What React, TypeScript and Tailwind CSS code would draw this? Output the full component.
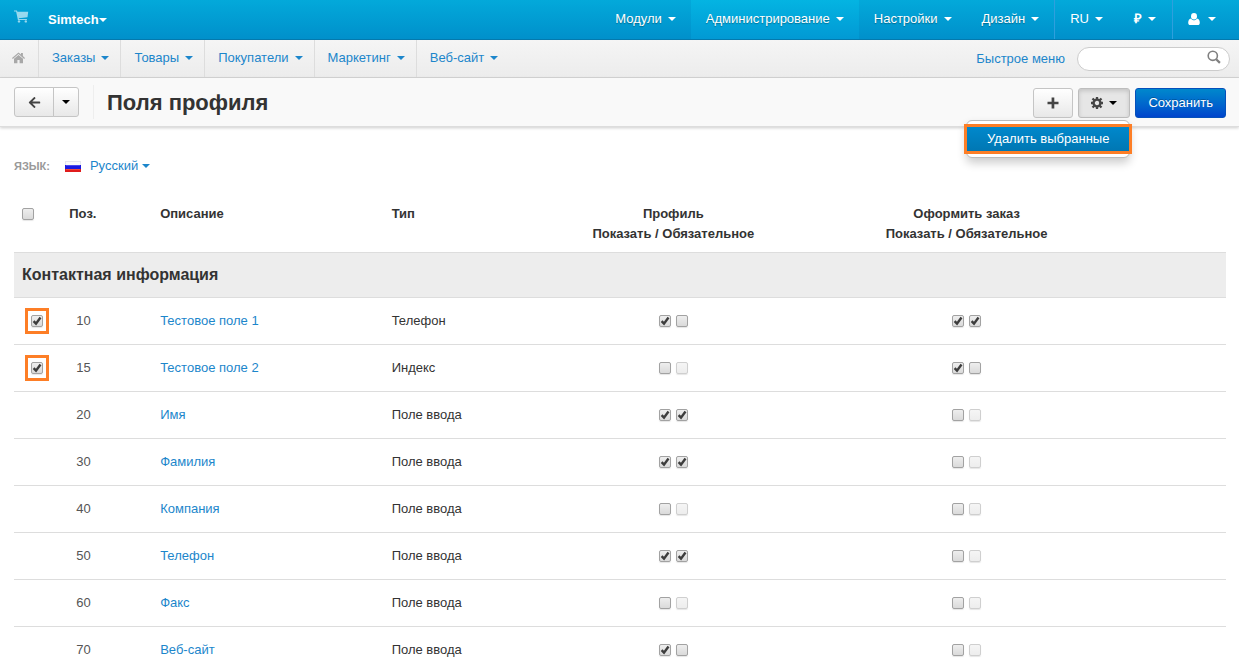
import React, { useState } from 'react';
import { FaArrowLeft } from 'react-icons/fa';

type MenuItem = {
  label: string;
  active?: boolean;
};

type Check = 'on' | 'off' | 'disabled';

type Field = {
  pos: number;
  name: string;
  type: string;
  removable?: boolean;
  profile: [Check, Check];
  checkout: [Check, Check];
};

const adminMenu: MenuItem[] = [
  { label: 'Модули' },
  { label: 'Администрирование', active: true },
  { label: 'Настройки' },
  { label: 'Дизайн' },
];

const storeMenu: string[] = ['Заказы', 'Товары', 'Покупатели', 'Маркетинг', 'Веб-сайт'];

const fields: Field[] = [
  { pos: 10, name: 'Тестовое поле 1', type: 'Телефон', removable: true, profile: ['on', 'off'], checkout: ['on', 'on'] },
  { pos: 15, name: 'Тестовое поле 2', type: 'Индекс', removable: true, profile: ['off', 'disabled'], checkout: ['on', 'off'] },
  { pos: 20, name: 'Имя', type: 'Поле ввода', profile: ['on', 'on'], checkout: ['off', 'disabled'] },
  { pos: 30, name: 'Фамилия', type: 'Поле ввода', profile: ['on', 'on'], checkout: ['off', 'disabled'] },
  { pos: 40, name: 'Компания', type: 'Поле ввода', profile: ['off', 'disabled'], checkout: ['off', 'disabled'] },
  { pos: 50, name: 'Телефон', type: 'Поле ввода', profile: ['on', 'on'], checkout: ['off', 'disabled'] },
  { pos: 60, name: 'Факс', type: 'Поле ввода', profile: ['off', 'disabled'], checkout: ['off', 'disabled'] },
  { pos: 70, name: 'Веб-сайт', type: 'Поле ввода', profile: ['on', 'off'], checkout: ['off', 'disabled'] },
];

const Caret = () => (
  <span className="inline-block border-x-4 border-t-4 border-x-transparent border-t-current" />
);

const CartIcon = () => (
  <svg viewBox="0 0 15 13" className="h-[13px] w-[15px]" fill="currentColor">
    <path d="M0 .4h3l.4 1.400H14.200l-.7 5.400-8.700 1 .2.700h7.900v1.200H3.900L2.100 1.600H0z" />
    <circle cx="5" cy="11.400" r="1.200" />
    <circle cx="11.800" cy="11.400" r="1.200" />
  </svg>
);

const HomeIcon = () => (
  <svg viewBox="0 0 13 12" className="h-3 w-[13px]" fill="currentColor">
    <path d="M6.500 2.900 2 6.700V11.300h3.400V8h2.200v3.300H11V6.700z" />
    <path d="M6.500.4 9 2.500V1h1.900v3.100L13 6l-.8.900L6.500 2.100.8 6.900 0 6z" />
  </svg>
);

const UserIcon = () => (
  <svg viewBox="0 0 12 12" className="size-3" fill="currentColor">
    <ellipse cx="6" cy="3.300" rx="3" ry="3.300" />
    <path d="M3 5.400C1.200 5.700.2 7.300.2 9.700c0 1.400.8 2.300 2 2.300h7.600c1.200 0 2-.9 2-2.300 0-2.400-1-4-2.800-4.300C8.300 6.500 7.200 7.200 6 7.200S3.700 6.500 3 5.400z" />
  </svg>
);

const SearchIcon = () => (
  <svg viewBox="0 0 14 14" className="size-3.5" fill="none" stroke="currentColor">
    <circle cx="5.800" cy="5.800" r="4.600" strokeWidth="1.600" />
    <path d="M9.200 9.200l3.700 3.700" strokeWidth="2.200" />
  </svg>
);

const PlusIcon = () => (
  <svg viewBox="0 0 12 12" className="size-3" fill="currentColor">
    <path d="M4.600.5h2.700v4.200h4.200v2.600H7.300v4.200H4.600V7.300H.5V4.700h4.100z" />
  </svg>
);

const GearIcon = () => (
  <svg viewBox="0 0 12 12" className="size-3" fill="none" stroke="currentColor">
    <circle cx="6" cy="6" r="3.400" strokeWidth="2.400" />
    <path
      d="M6 0v2.200M6 9.800V12M0 6h2.200M9.800 6H12M1.500 1.500l1.800 1.800M8.700 8.700l1.800 1.800M1.500 10.500l1.800-1.800M8.700 3.300l1.800-1.800"
      strokeWidth="2.300"
    />
  </svg>
);

const FlagIcon = () => (
  <svg viewBox="0 0 16 11" className="h-[11px] w-4">
    <rect width="16" height="11" fill="#e4e4ee" />
    <rect x="1" y="1" width="14" height="3" fill="#fafafa" />
    <rect y="4" width="16" height="4" fill="#1a1ae0" />
    <rect x="1" y="4" width="14" height="1" fill="#4a4af0" />
    <rect y="8" width="16" height="3" fill="#e01c1c" />
    <rect x="1" y="8" width="14" height="1" fill="#f04a3a" />
  </svg>
);

type CheckboxProps = {
  label: string;
  state?: Check;
};

const Checkbox = ({ label, state = 'off' }: CheckboxProps) => (
  <span className="relative block size-3">
    <input
      type="checkbox"
      aria-label={label}
      defaultChecked={state === 'on'}
      disabled={state === 'disabled'}
      className="peer block size-3 appearance-none rounded-[2px] border border-[#a2a2a2] bg-gradient-to-b from-[#eeeeee] to-[#dadada] shadow-[0_1px_1px_rgba(0,0,0,0.1)] disabled:border-[#cfcfcf] disabled:from-[#f5f5f5] disabled:to-[#ededed]"
    />
    <svg
      viewBox="0 0 12 12"
      className="pointer-events-none invisible absolute inset-0 size-3 peer-checked:visible"
      fill="none"
      stroke="#3d3d3d"
      strokeWidth="2.400"
    >
      <path d="M2.600 6.200l2.400 2.500 4.500-6.200" />
    </svg>
  </span>
);

const CheckPair = ({ states, group }: { states: [Check, Check]; group: string }) => (
  <div className="flex justify-center gap-[5px]">
    <Checkbox state={states[0]} label={`${group}: Показать`} />
    <Checkbox state={states[1]} label={`${group}: Обязательное`} />
  </div>
);

const TopBar = () => (
  <header className="flex h-10 items-stretch border-b border-[#0479ad] bg-gradient-to-b from-[#03a9da] to-[#0190cb] text-white [text-shadow:0_1px_1px_rgba(0,0,0,0.3)]">
    <a href="#" aria-label="Корзина" className="pt-2.5 pl-3.5 text-white/60">
      <CartIcon />
    </a>
    <button type="button" className="ml-[19px] flex items-center font-bold">
      Simtech
      <Caret />
    </button>
    <nav className="ml-auto flex">
      {adminMenu.map((item) => (
        <a
          key={item.label}
          href="#"
          className={`flex items-center gap-1.5 px-[15px] pb-0.5 ${
            item.active ? 'bg-gradient-to-b from-[#04b4e2] to-[#0299d4]' : ''
          }`}
        >
          {item.label}
          <Caret />
        </a>
      ))}
    </nav>
    <div className="flex border-l border-[#2f9fdd] pb-0.5">
      <button type="button" className="flex items-center gap-1.5 px-[15px]">
        RU
        <Caret />
      </button>
      <button type="button" className="flex items-center gap-1.5 px-4 font-bold">
        ₽
        <Caret />
      </button>
    </div>
    <button
      type="button"
      aria-label="Профиль"
      className="mr-2 flex items-center gap-2 border-l border-[#2f9fdd] px-[15px] pb-0.5"
    >
      <UserIcon />
      <Caret />
    </button>
  </header>
);

const SubBar = () => (
  <div className="flex h-[38px] items-stretch border-b border-[#d6d6d6] bg-gradient-to-b from-[#f5f5f5] to-[#ececec]">
    <a
      href="#"
      aria-label="Главная"
      className="flex items-center border-r border-[#dddddd] pr-[13px] pb-0.5 pl-3 text-[#a8a8a8]"
    >
      <HomeIcon />
    </a>
    <nav className="flex text-[#1c86cb]">
      {storeMenu.map((label) => (
        <a
          key={label}
          href="#"
          className="flex items-center gap-1.5 border-r border-[#dddddd] pr-[11px] pb-0.5 pl-[13px] last:border-r-0"
        >
          {label}
          <Caret />
        </a>
      ))}
    </nav>
    <div className="ml-auto flex items-center gap-3 pr-[9px]">
      <a href="#" className="text-[#1c86cb]">
        Быстрое меню
      </a>
      <div className="flex h-6 w-[153px] items-center rounded-full border border-[#cccccc] bg-white pr-2">
        <input type="text" aria-label="Поиск" className="h-full min-w-0 flex-1 bg-transparent pl-3 outline-none" />
        <button type="button" aria-label="Найти" className="pb-1 text-[#808080]">
          <SearchIcon />
        </button>
      </div>
    </div>
  </div>
);

const grayButton =
  'flex h-[30px] items-center justify-center border border-[#c5c5c5] bg-gradient-to-b from-white to-[#e8e8e8] text-[#444444]';

const ActionBar = () => {
  const [open, setOpen] = useState(true);

  return (
    <div className="flex h-[49px] items-center border-b border-[#dddddd] bg-[#f9f9f9] pr-[13px] pl-[14px] shadow-[0_1px_3px_rgba(0,0,0,0.2)]">
      <div className="flex">
        <button type="button" aria-label="Назад" className={`${grayButton} w-10 rounded-l-[3px]`}>
          <FaArrowLeft className="size-[13px]" />
        </button>
        <button
          type="button"
          aria-label="История"
          className={`${grayButton} -ml-px w-[26px] rounded-r-[3px] text-black`}
        >
          <Caret />
        </button>
      </div>
      <h1 className="ml-3.5 border-l border-[#eeeeee] pt-0.5 pl-[13px] text-[22px] leading-8 font-bold text-[#333333]">
        Поля профиля
      </h1>

      <div className="ml-auto flex gap-[5px] pt-0.5">
        <button type="button" aria-label="Добавить поле" className={`${grayButton} w-10 rounded-[3px]`}>
          <PlusIcon />
        </button>
        <div className="relative">
          <button
            type="button"
            aria-label="Действия"
            aria-expanded={open}
            onClick={() => setOpen(!open)}
            className="flex h-[30px] w-[52px] items-center justify-center gap-1.5 rounded-[3px] border border-[#bdbdbd] bg-[#e6e6e6] text-[#444444] shadow-[inset_0_2px_4px_rgba(0,0,0,0.15)]"
          >
            <GearIcon />
            <span className="flex text-black">
              <Caret />
            </span>
          </button>
          {/* Dropdown with the highlighted action */}
          {open && (
            <div className="absolute top-full right-0 z-10 mt-0.5 rounded-md border border-[#bbbbbb] bg-white py-1.5 shadow-[0_5px_10px_rgba(0,0,0,0.2)]">
              <button
                type="button"
                className="block bg-gradient-to-b from-[#0088cc] to-[#0077b3] px-5 leading-6 whitespace-nowrap text-white outline-3 outline-[#fd7e26]"
              >
                Удалить выбранные
              </button>
            </div>
          )}
        </div>
        <button
          type="button"
          className="h-[30px] rounded-[3px] border border-[#0550bb] bg-gradient-to-b from-[#0088cc] to-[#0044cc] px-3 text-white [text-shadow:0_-1px_0_rgba(0,0,0,0.25)]"
        >
          Сохранить
        </button>
      </div>
    </div>
  );
};

const FieldRow = ({ field }: { field: Field }) => (
  <tr className="h-[47px] border-b border-[#dddddd]">
    <td className="pl-[11px]">
      {field.removable && (
        <span className="flex h-[26px] w-6 items-center justify-center border-3 border-[#fd7e26]">
          <Checkbox state="on" label={field.name} />
        </span>
      )}
    </td>
    <td className="pl-[15px] text-[#555555]">{field.pos}</td>
    <td className="px-2">
      <a href="#" className="text-[#1c86cb]">
        {field.name}
      </a>
    </td>
    <td className="px-2">{field.type}</td>
    <td>
      <CheckPair states={field.profile} group={`${field.name}, Профиль`} />
    </td>
    <td>
      <CheckPair states={field.checkout} group={`${field.name}, Оформить заказ`} />
    </td>
    <td />
  </tr>
);

const FieldsTable = () => (
  <table className="w-full table-fixed border-collapse text-left">
    <colgroup>
      <col className="w-[3.9%]" />
      <col className="w-[7.5%]" />
      <col className="w-[19.1%]" />
      <col className="w-[11.8%]" />
      <col className="w-[24.2%]" />
      <col className="w-[24.2%]" />
      <col />
    </colgroup>
    <thead>
      <tr className="align-top">
        <th className="pt-1 pl-2">
          <Checkbox label="Выбрать все" />
        </th>
        <th className="px-2">Поз.</th>
        <th className="px-2">Описание</th>
        <th className="px-2">Тип</th>
        <th className="pb-2 text-center">
          Профиль
          <br />
          Показать / Обязательное
        </th>
        <th className="pb-2 text-center">
          Оформить заказ
          <br />
          Показать / Обязательное
        </th>
        <th />
      </tr>
    </thead>
    <tbody>
      <tr className="h-[45px] border-y border-[#dddddd] bg-[#ededed]">
        <th colSpan={7} className="px-2 text-base">
          Контактная информация
        </th>
      </tr>
      {fields.map((field) => (
        <FieldRow key={field.pos} field={field} />
      ))}
    </tbody>
  </table>
);

const App = () => {
  return (
    <div className="bg-white font-['Liberation_Sans',Arial,sans-serif] text-[13px] leading-5 text-[#333333]">
      <TopBar />
      <SubBar />
      <ActionBar />
      <main className="pr-[13px] pl-[14px]">
        <div className="flex items-center pt-[29px] pb-7">
          <span className="text-[11px] font-bold text-[#999999] uppercase">Язык:</span>
          <button type="button" className="ml-[15px] flex items-center text-[#1c86cb]">
            <FlagIcon />
            <span className="mr-1 ml-[9px]">Русский</span>
            <Caret />
          </button>
        </div>
        <FieldsTable />
      </main>
    </div>
  );
};

export default App;
